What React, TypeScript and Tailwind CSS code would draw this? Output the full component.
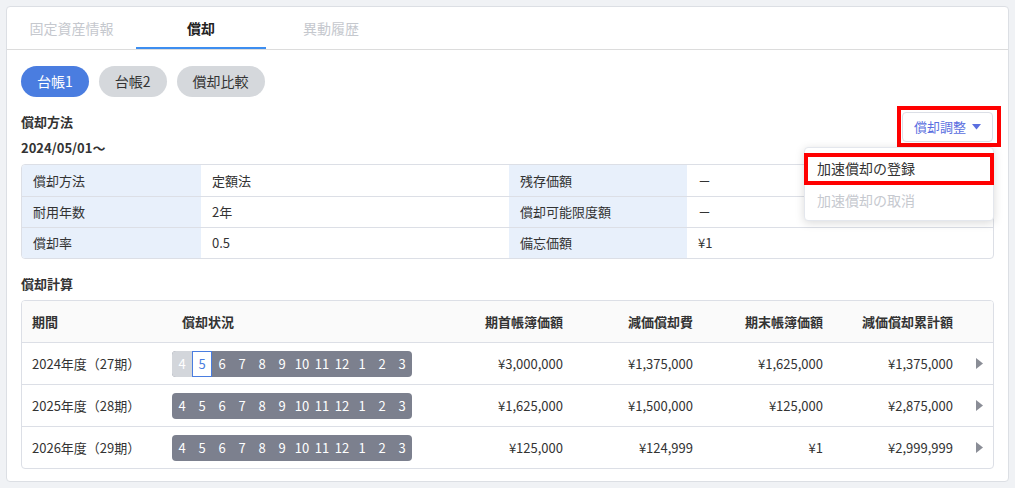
import React from 'react';

const FONT = { fontFamily: '"Noto Sans CJK JP", "Noto Sans", sans-serif' };

const tabs = ['固定資産情報', '償却', '異動履歴'];
const ledgers = ['台帳1', '台帳2', '償却比較'];
const months = [4, 5, 6, 7, 8, 9, 10, 11, 12, 1, 2, 3];

const infoRows = [
  ['償却方法', '定額法', '残存価額', '－'],
  ['耐用年数', '2年', '償却可能限度額', '－'],
  ['償却率', '0.5', '備忘価額', '¥1'],
];

const calcRows = [
  { period: '2024年度（27期）', first: true, a: '¥3,000,000', b: '¥1,375,000', c: '¥1,625,000', d: '¥1,375,000' },
  { period: '2025年度（28期）', first: false, a: '¥1,625,000', b: '¥1,500,000', c: '¥125,000', d: '¥2,875,000' },
  { period: '2026年度（29期）', first: false, a: '¥125,000', b: '¥124,999', c: '¥1', d: '¥2,999,999' },
];

const MonthBar = ({ first }: { first: boolean }) => (
  <div className="flex h-[26px] w-[240px] overflow-hidden rounded-[4px] bg-[#7c808e]">
    {months.map((m, i) => {
      let cls = 'text-white';
      if (first && i === 0) cls = 'bg-[#d3d6db] text-white';
      if (first && i === 1) cls = 'bg-white text-[#4a7de0] border border-[#4a7de0]';
      return (
        <div key={i} className={`flex w-[20px] items-center justify-center text-[13px] ${cls}`}>
          {m}
        </div>
      );
    })}
  </div>
);

export default function App() {
  return (
    <div className="h-[488px] w-[1015px] bg-[#f0f2f5] p-[6px] text-[#333]" style={FONT}>
      <div className="h-[476px] rounded-[4px] border border-[#dcdfe4] bg-white">
        {/* tabs */}
        <div className="flex h-[43px] border-b border-[#dcdcdc]">
          {tabs.map((t, i) => (
            <div
              key={t}
              className={`relative flex items-center justify-center text-[14px] ${i === 0 ? 'w-[129px]' : 'w-[130px]'} ${
                i === 1 ? 'font-bold text-[#222]' : 'text-[#c5c8ce]'
              }`}
            >
              {t}
              {i === 1 && <div className="absolute bottom-0 left-0 h-[2px] w-full bg-[#3d8ef0]" />}
            </div>
          ))}
        </div>

        <div className="px-[14px]">
          {/* ledger pills */}
          <div className="mt-[16px] flex gap-[10px]">
            {ledgers.map((l, i) => (
              <div
                key={l}
                className={`flex h-[31px] items-center rounded-full px-4 text-[14px] ${
                  i === 0 ? 'bg-[#4a7de0] text-white' : 'bg-[#d5d8dc] text-[#333]'
                }`}
              >
                {l}
              </div>
            ))}
          </div>

          {/* heading + adjust button */}
          <div className="mt-[15px] flex items-start justify-between">
            <div className="flex flex-col gap-[6px]">
              <div className="h-[20px] text-[13px] font-bold leading-[20px]">償却方法</div>
              <div className="h-[20px] text-[13px] font-bold leading-[20px]">2024/05/01〜</div>
            </div>
            <div className="relative">
              <div className="pointer-events-none absolute -left-[5px] -right-[7px] -top-[6px] -bottom-[5px] border-[4px] border-[#ff0000]" />
              <div className="mr-[1px] flex h-[30px] items-center gap-[6px] rounded-[4px] border border-[#dcdfe6] px-[11px] text-[13px] text-[#5b6fe0]">
                償却調整
                <svg width="9" height="6" viewBox="0 0 9 6">
                  <path d="M0 0h9L4.5 5.5z" fill="#5b6fe0" />
                </svg>
              </div>
              {/* dropdown */}
              <div className="absolute right-0 top-[35px] z-10 w-[190px] rounded-[4px] border border-[#e4e7ed] bg-white py-[4px] shadow-[0_2px_10px_rgba(0,0,0,0.15)]">
                <div className="relative flex h-[32px] items-center px-[12px] text-[14px] text-[#333]">
                  加速償却の登録
                  <div className="pointer-events-none absolute -left-[1px] -right-[1px] top-[1px] bottom-[-1px] border-[4px] border-[#ff0000]" />
                </div>
                <div className="flex h-[32px] items-center px-[12px] text-[14px] text-[#c6c9cf]">加速償却の取消</div>
              </div>
            </div>
          </div>

          {/* info table */}
          <div className="mt-[6px] overflow-hidden rounded-[4px] border border-[#dcdfe6]">
            {infoRows.map((r, i) => (
              <div
                key={i}
                className={`grid h-[31px] grid-cols-[179px_308px_178px_1fr] text-[13px] ${
                  i > 0 ? 'border-t border-[#dcdfe6]' : ''
                }`}
              >
                <div className="flex items-center bg-[#e8f0fb] pl-[11px]">{r[0]}</div>
                <div className="flex items-center pl-[11px]">{r[1]}</div>
                <div className="flex items-center bg-[#e8f0fb] pl-[11px]">{r[2]}</div>
                <div className="flex items-center pl-[11px]">{r[3]}</div>
              </div>
            ))}
          </div>

          {/* calc */}
          <div className="mt-[15px] h-[20px] text-[13px] font-bold leading-[20px]">償却計算</div>
          <div className="mt-[6px] overflow-hidden rounded-[4px] border border-[#dcdfe6]">
            <div className="flex h-[41px] items-center bg-[#fafafa] text-[13px] font-bold">
              <div className="w-[150px] pl-[10px]">期間</div>
              <div className="w-[261px] pl-[10px]">償却状況</div>
              <div className="w-[140px] pr-[10px] text-right">期首帳簿価額</div>
              <div className="w-[130px] pr-[10px] text-right">減価償却費</div>
              <div className="w-[130px] pr-[10px] text-right">期末帳簿価額</div>
              <div className="w-[130px] pr-[10px] text-right">減価償却累計額</div>
            </div>
            {calcRows.map((r) => (
              <div key={r.period} className="flex h-[42px] items-center border-t border-[#dcdfe6] text-[13px]">
                <div className="w-[150px] pl-[10px]">{r.period}</div>
                <div className="w-[261px]">
                  <MonthBar first={r.first} />
                </div>
                <div className="w-[140px] pr-[10px] text-right">{r.a}</div>
                <div className="w-[130px] pr-[10px] text-right">{r.b}</div>
                <div className="w-[130px] pr-[10px] text-right">{r.c}</div>
                <div className="w-[130px] pr-[10px] text-right">{r.d}</div>
                <div className="flex flex-1 justify-center pl-[2px]">
                  <svg width="7" height="11" viewBox="0 0 7 11">
                    <path d="M0 0l7 5.5L0 11z" fill="#8a8d96" />
                  </svg>
                </div>
              </div>
            ))}
          </div>
        </div>
      </div>
    </div>
  );
}
